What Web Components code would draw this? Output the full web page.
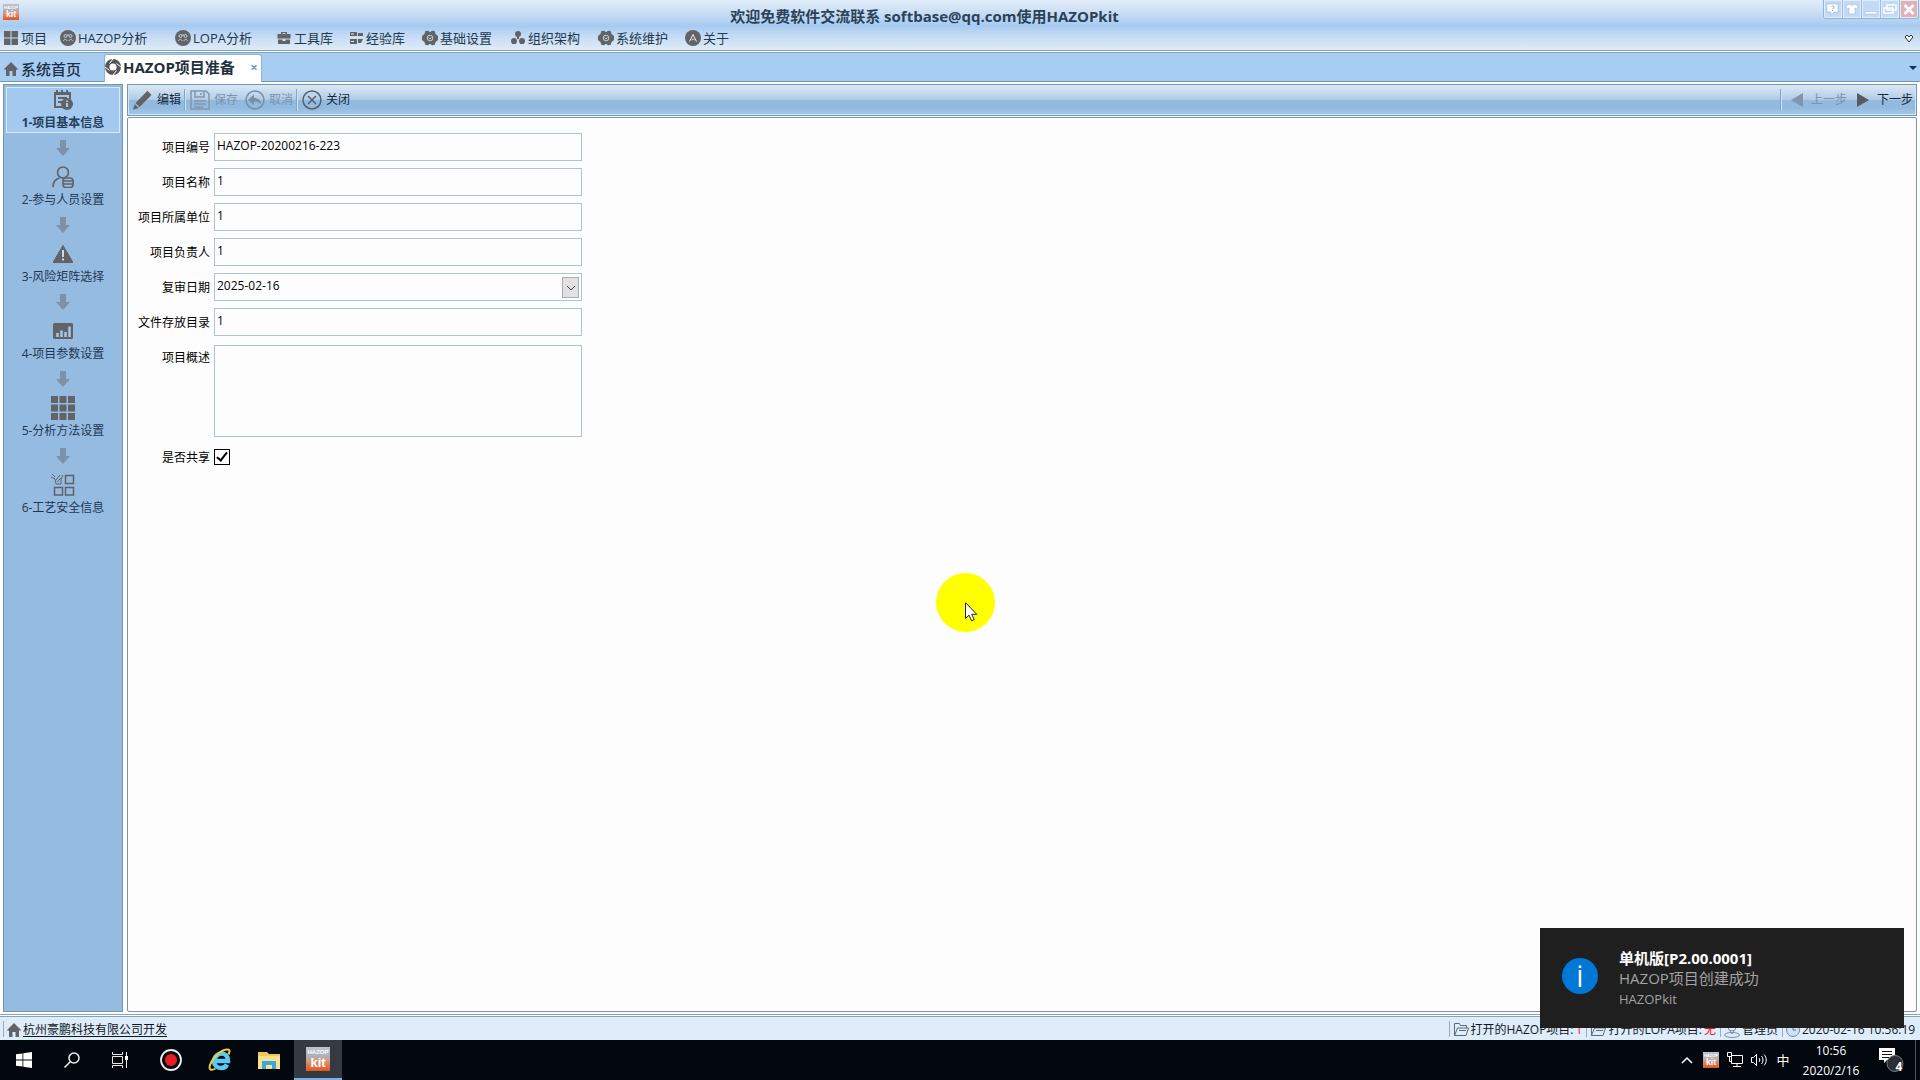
<!DOCTYPE html>
<html lang="zh-CN">
<head>
<meta charset="utf-8">
<title>HAZOPkit</title>
<style>
html,body{height:100%;margin:0}
body{font-family:"Open Sans","Noto Sans CJK SC",sans-serif;font-size:12px;line-height:16px;color:#101820;background:#fff;overflow:hidden;
--line:#7397ab;--ink:#22384f;--icon:#626366}
</style>
</head>
<body>
<hk-app></hk-app>
<script>
const define = (name, html, setup) => {
  const tpl = document.createElement('template');
  tpl.innerHTML = html;
  customElements.define(name, class extends HTMLElement {
    constructor() {
      super();
      this.attachShadow({ mode: 'open' }).append(tpl.content.cloneNode(true));
    }
    connectedCallback() {
      if (this.ready) return;
      this.ready = true;
      if (setup) setup(this, this.shadowRoot);
    }
  });
};

const gear = '<path d="M3.500 1 6 .8l2 1.500L10 .8l2.500.2 1.100 3L16 6v4l-2.400 2-1.100 3-2.500.2-2-1.500-2 1.500-2.500-.2-1.100-3L0 10V6l2.400-2z"/><circle cx="8" cy="8" r="2.800" fill="none" stroke="#c3d0de"/><path d="M6.500 7.500 8 9l1.500-1.500" fill="none" stroke="#c3d0de"/>';
const badge = '<circle cx="8" cy="8" r="8"/><g fill="none" stroke="#c3d0de"><circle cx="5.500" cy="6" r="1.500"/><circle cx="10.500" cy="6" r="1.500"/><path d="M3.500 11c0-2 3.500-2 3.500 0M9 11c0-2 3.500-2 3.500 0M8 4v2"/></g>';
const kit = '<defs><linearGradient id="k" x2="0" y2="1"><stop stop-color="#bfc3cd"/><stop offset=".4" stop-color="#aeb0b8"/><stop offset=".55" stop-color="#d79a80"/><stop offset="1" stop-color="#e2551f"/></linearGradient></defs><rect width="24" height="24" fill="url(#k)"/><g fill="#fff" font-family="Liberation Sans" font-weight="700" text-anchor="middle"><text x="12" y="7" font-size="6">HAZOP</text><text x="12" y="20" font-size="13">kit</text></g>';
const folder = '<g fill="none" stroke="#5e6a76" stroke-width="1"><path d="M1.500 13.500v-12h5l1 2h6v2.500"/><path d="M1.500 13.500 4.500 6h11l-2.500 7.500z"/><path d="M6 8.500h7"/></g>';

const icons = {
  grid4: [14, '<path d="M0 0h6.500v6.500H0zM7.500 0H14v6.500H7.500zM0 7.500h6.500V14H0zM7.500 7.500H14V14H7.500z"/>'],
  badge: [16, badge],
  gear: [16, gear],
  kit: [24, kit],
  folder: [16, folder],
  cabinet: [16, '<path d="M5 4V2h6v2h3.500v4.500h-13V4zm1.500 0h3V3h-3zM2 9.500h4.500V11h3V9.500H14V14H2z"/>'],
  library: [16, '<path d="M2 2h7v4H2zM2 9h7v5H2zM10 3h5v3h-5zM10 9h5l-2 4h-3z"/><path d="M3 4h3M3 11.500h3M2 7.500h12" stroke="#dce8f5" fill="none"/>'],
  org: [16, '<circle cx="8" cy="4" r="3"/><circle cx="4" cy="11" r="3"/><circle cx="12" cy="11" r="3"/><path d="M2 10.500h4V14H2zM10 10.500h4V14h-4zM7 6h2v3H7z"/>'],
  about: [16, '<circle cx="8" cy="8" r="8"/><path d="M4.500 11.500 8 4.500l3.500 7M6.500 10c1-1 2-1 3 0" fill="none" stroke="#e2ebf5"/>'],
  home: [14, '<path d="M7 0 14 7l-1 1-1-.7V14H8.500V9h-3v5H2V7.300L1 8 0 7z"/>'],
  aperture: [16, '<circle cx="8" cy="8" r="5.800" fill="none" stroke="#555" stroke-width="4.400"/><path d="M4.500 4.500 8 0M11.500 4.500 16 8M11.500 11.500 8 16M4.500 11.500 0 8" stroke="#fff" fill="none"/>'],
  plan: [20, '<path d="M1 2h17v3H1zM3 0h2v3H3zM8 0h2v3H8zM13 0h2v3h-2z"/><path d="M2 4v13h8M17 4v5M5 8h9M5 12h4" fill="none" stroke="#626366" stroke-width="2"/><circle cx="14" cy="14" r="6"/><path d="M14 13v4M14 10.500v1.500" stroke="#a3c9ef" stroke-width="2" fill="none"/>'],
  person: [22, '<g fill="none" stroke="#626366" stroke-width="1.600"><circle cx="11" cy="6.500" r="5.500"/><path d="M1 21c0-5 3-8 6.500-9"/><rect x="11" y="12" width="10" height="9.500" rx="3"/><path d="M11 15h11M11 18h11"/></g>'],
  warning: [20, '<path d="M10 1.500 20 18.500H0z" stroke="#626366" stroke-linejoin="round"/><path d="M10 6v7M10 14.500v2" stroke="#c8dcf0" stroke-width="2"/>'],
  chart: [20, '<rect y="2" width="20" height="16" rx="1.500"/><path d="M4.500 16v-4M8.500 16V9.500M12.500 16v-5M16.500 16V5.500" stroke="#a8c8e8" stroke-width="2.500"/>'],
  grid9: [24, '<path d="M0 0h7v7H0zM8.500 0h7v7h-7zM17 0h7v7h-7zM0 8.500h7v7H0zM8.500 8.500h7v7h-7zM17 8.500h7v7h-7zM0 17h7v7H0zM8.500 17h7v7h-7zM17 17h7v7h-7z"/>'],
  process: [24, '<g fill="none" stroke="#626366" stroke-width="1.500"><path d="M14.500 2.500h8v8h-8zM3.500 14.500h8v7.500h-8zM14.500 14.500h8v7.500h-8z"/></g><path fill="none" stroke="#626366" d="M1 1l3 3M0 4l4 2 1 5h5V6l2-4M9 2 5 7M6 9l4-4"/>'],
  down: [16, '<path d="M5 0h6v8h4l-7 8-7-8h4z" fill="#7d91a8"/>'],
  pencil: [20, '<path d="M14.500.8 18.500 5l-12 12-4-4zM1.800 14.200l3.800 3.800L0 19.800z"/>'],
  save: [20, '<g fill="none" stroke="#8296aa" stroke-width="1.500"><path d="M1 1h15l3 3v15H1zM5 1v6h9V1M4 11h12M4 14h12M4 17h9M11 3v2"/></g>'],
  undo: [20, '<circle cx="10" cy="10" r="9" fill="none" stroke="#7a8fa5" stroke-width="1.500"/><path d="M9 4.500V8c4 0 7 2 7 6.500C14 12 12 11.500 9 11.500V15l-6-5z" fill="#7a8fa5"/>'],
  close: [20, '<g fill="none" stroke="#56616c" stroke-width="1.500"><circle cx="10" cy="10" r="9"/><path d="m6 6 8 8M14 6l-8 8"/></g>'],
  prev: [14, '<path d="M13 0v14L1 7z" fill="#8095ab"/>'],
  next: [14, '<path d="M1 0v14l12-7z" fill="#585c62"/>'],
  user: [16, '<g fill="none" stroke="#7d8fa2"><circle cx="8" cy="5" r="4"/><path d="M6 9 8 12l2-3"/><ellipse cx="8" cy="13" rx="7.500" ry="2.500"/></g>'],
  clock: [14, '<circle cx="7" cy="7" r="6.500" fill="#cfe2f4" stroke="#6c8cab"/><path d="M7 3v4h3" fill="none" stroke="#55708c"/>'],
  info: [36, '<circle cx="18" cy="18" r="18" fill="#0078d7"/><path d="M18 12v17M18 7.500v2.500" stroke="#fff" stroke-width="2.500"/>'],
  windows: [16, '<path fill="#fff" d="M0 2.300 6.500 1.400V7.600H0zM7.300 1.300 16 0v7.600H7.300zM0 8.400h6.500v6.200L0 13.700zM7.300 8.400H16V16l-8.700-1.300z"/>'],
  search: [16, '<g fill="none" stroke="#f0f0f0" stroke-width="1.500"><circle cx="10" cy="6" r="5"/><path d="M6.500 9.500.5 15.500"/></g>'],
  taskview: [16, '<path fill="none" stroke="#e8e8e8" d="M.5 0v2.500h10V0M.5 4.500h10v7H.5zM.5 16v-2.500h10V16M14.500 0v16"/><path fill="#fff" d="M13 4h3v4h-3z"/>'],
  record: [22, '<circle cx="11" cy="11" r="10" fill="#080808" stroke="#eee" stroke-width="1.800"/><circle cx="11" cy="11" r="6" fill="#e81c24"/>'],
  ie: [24, '<path fill="none" stroke="#5cc8f5" stroke-width="4.500" d="M6 13h14c0-5-3-7.500-6.500-7.500S6 9 6 13s3 7 7 7c3 0 5-1.200 6-3.500"/><path fill="none" stroke="#f5cf35" stroke-width="2" d="M20.500 6.500c2-4 .8-5.500-2-5C13 2 4.500 9.500 2 17c-1.500 5 1 6 5.500 3.500"/>'],
  explorer: [24, '<path fill="#f0c95c" d="M1 4h9l2 2h11v15H1z"/><path fill="#fbe18f" d="M1 8h22v13H1z"/><path fill="#39a9dc" d="M5 13h14v8h-4v-4H9v4H5z"/>'],
  up: [12, '<path d="M1 9l5-5 5 5" fill="none" stroke="#fff" stroke-width="1.500"/>'],
  network: [16, '<path d="M4.500 3.500h11v8h-11zM10 11.500v3M6 14.500h8M.5.500h4v4h-4zM2.500 4.500v5h2" fill="#03080f" stroke="#fff"/>'],
  sound: [16, '<g fill="none" stroke="#fff"><path d="M.5 5.500h2l3-3v11l-3-3h-2zM8 6c1 1 1 3 0 4M10.500 4c2 2 2 6 0 8M13 2.500c3 3 3 8 0 11"/></g>'],
  action: [26, '<path d="M1 1h16v12h-8l-3 3v-3H1z" fill="#fff"/><path d="M4 4.500h10M4 7.500h10M4 10.500h7" stroke="#10151c"/><circle cx="17" cy="16.500" r="8" fill="#2a2d31" stroke="#777b80"/>'],
  help: [16, '<path fill="#fff" stroke="#8faed0" stroke-width=".5" d="M2 3h11v8H9l-3 3v-3H2z"/><path d="M6.500 5.500c1-1.500 3.500 0 2 1.500l-1 1M7.500 9v1" fill="none" stroke="#89a9cc"/>'],
  shirt: [16, '<path fill="#fff" stroke="#8faed0" stroke-width=".5" d="M5 3c2 1.500 4 1.500 6 0l3.500 2.500-2 2.500-1.500-1v6H5V7L3.500 8l-2-2.500z"/>'],
  min: [16, '<path fill="#fff" stroke="#9bb7d6" stroke-width=".5" d="M2 10.500h12V13H2z"/>'],
  max: [16, '<path fill="#b7d2ef" stroke="#fff" stroke-width="1.500" d="M5 4h9v5H5zM2 7h9v5H2z"/>'],
  x: [16, '<path d="m3.500 4 9 9M12.500 4l-9 9" stroke="#fff" stroke-width="2.500"/>'],
  more: [10, '<path d="M1 3l2-2 2 2 2-2 2 2-4 5z" fill="#fff" stroke="#22384f"/>'],
  caret: [8, '<path d="M0 2h8L4 6z" fill="#17304f"/>'],
  chevron: [10, '<path d="M1 3l4 4 4-4" fill="none" stroke="#444"/>']
};

define('hk-icon', `<style>:host{display:block;flex:none;color:var(--icon)}svg{display:block;overflow:hidden}</style><svg fill="currentColor" aria-hidden="true"></svg>`, (el, root) => {
  const [box, art] = icons[el.getAttribute('name')];
  const size = el.getAttribute('size') || box;
  const svg = root.querySelector('svg');
  svg.setAttribute('viewBox', `0 0 ${box} ${box}`);
  svg.setAttribute('width', size);
  svg.setAttribute('height', size);
  svg.innerHTML = art;
});

define('hk-titlebar', `<style>
:host{display:flex;height:27px;align-items:flex-start}
.logo{padding:4px 3px}
h1{flex:1;text-align:center;margin:0;padding:6px 0 0 4px;font-size:15px;line-height:20px;font-weight:700;color:#2a4258}
.win{display:flex;margin-right:1px;border:1px solid #8fb3dd;border-top:0;border-radius:0 0 3px 3px;overflow:hidden}
button{width:19px;height:18px;padding:0;border:0;border-right:1px solid #9dbde2;background:#c3daf4;display:grid;place-items:center;box-shadow:inset 0 0 0 1px #dfecfa}
button:last-child{background:#e2b0b8;border-right:0;width:18px}
</style><div class="logo"><hk-icon name="kit" size="16"></hk-icon></div><h1><slot></slot></h1>
<div class="win"><button aria-label="帮助"><hk-icon name="help"></hk-icon></button><button aria-label="皮肤"><hk-icon name="shirt"></hk-icon></button><button aria-label="最小化"><hk-icon name="min"></hk-icon></button><button aria-label="还原"><hk-icon name="max"></hk-icon></button><button aria-label="关闭"><hk-icon name="x"></hk-icon></button></div>`);

define('hk-menu-item', `<style>:host{display:block}
button{display:flex;align-items:center;gap:2px;padding:0;border:0;background:none;font:inherit;font-size:13px;line-height:20px;color:var(--ink);white-space:nowrap}
.i{width:16px;display:grid;place-items:center}
</style><button><span class="i"></span><slot></slot></button>`, (el, root) => {
  root.querySelector('.i').innerHTML = `<hk-icon name="${el.getAttribute('icon')}"></hk-icon>`;
});

define('hk-menubar', `<style>
:host{display:flex;justify-content:space-between;align-items:flex-start;height:23px;padding:0 6px 0 3px}
nav{display:grid;grid-template-columns:57px 115px 101px 72px 74px 88px 88px 87px auto;padding-top:1px}
button{border:0;background:none;padding:7px 0 0}
</style><nav>
<hk-menu-item icon="grid4">项目</hk-menu-item><hk-menu-item icon="badge">HAZOP分析</hk-menu-item><hk-menu-item icon="badge">LOPA分析</hk-menu-item><hk-menu-item icon="cabinet">工具库</hk-menu-item><hk-menu-item icon="library">经验库</hk-menu-item><hk-menu-item icon="gear">基础设置</hk-menu-item><hk-menu-item icon="org">组织架构</hk-menu-item><hk-menu-item icon="gear">系统维护</hk-menu-item><hk-menu-item icon="about">关于</hk-menu-item></nav>
<button aria-label="更多"><hk-icon name="more"></hk-icon></button>`);

define('hk-tabs', `<style>
:host{display:flex;height:29px;box-sizing:border-box;background:#a7cdf2;box-shadow:inset 0 -1px var(--line);font-size:15px;line-height:20px;color:#1c3047}
.tab{display:flex;align-items:center;gap:3px;border:0;background:none;font:inherit;color:inherit;font-weight:500;padding:3px 0 0 4px;width:100px;flex:none}
.on{margin-left:4px;width:158px;box-sizing:border-box;margin-top:1px;padding:0 3px 3px 0;gap:2px;background:#fff;border:1px solid #8fb3d3;border-bottom:0;border-radius:3px 3px 0 0;font-weight:700;display:flex;align-items:center;color:#222f3d}
.on span{flex:1}
.on button{border:0;background:none;padding:0;width:8px;font:700 13px/16px "Open Sans";color:#6a9cc6}
.more{margin-left:auto;border:0;background:none;padding:0 3px}
</style><button class="tab"><hk-icon name="home"></hk-icon>系统首页</button><div class="on"><hk-icon name="aperture"></hk-icon><span>HAZOP项目准备</span><button aria-label="关闭标签">×</button></div><button class="more" aria-label="标签列表"><hk-icon name="caret"></hk-icon></button>`);

define('hk-step', `<style>
:host{display:flex;flex-direction:column;align-items:center}
button{box-sizing:border-box;width:100%;height:46px;padding:0;border:1px solid transparent;background:none;font:inherit;color:#1d3854;display:flex;flex-direction:column;align-items:center;justify-content:space-between}
.i{height:24px;display:grid;place-items:center}
button span:last-child{line-height:18px}
:host([active]) button{border-color:#d8ebfc;background:#a3c9ef;font-weight:700;color:#24405c}
.arrow{padding:7px 0 8px}
:host(:last-of-type) .arrow{display:none}
</style><button><span class="i"></span><span><slot></slot></span></button><div class="arrow"><hk-icon name="down"></hk-icon></div>`, (el, root) => {
  root.querySelector('.i').innerHTML = `<hk-icon name="${el.getAttribute('icon')}"></hk-icon>`;
});

define('hk-sidebar', `<style>:host{display:block;box-sizing:border-box;border:1px solid var(--line);background:#95bbe1;padding:2px}</style>
<hk-step active icon="plan">1-项目基本信息</hk-step><hk-step icon="person">2-参与人员设置</hk-step><hk-step icon="warning">3-风险矩阵选择</hk-step><hk-step icon="chart">4-项目参数设置</hk-step><hk-step icon="grid9">5-分析方法设置</hk-step><hk-step icon="process">6-工艺安全信息</hk-step>`);

define('hk-tool', `<style>:host{display:block}
button{display:flex;align-items:center;gap:4px;padding:0;border:0;background:none;font:inherit;color:#16283c}
button:disabled{color:#7b93ab}
:host([wide]) button{gap:7px}
</style><button><span class="i"></span><slot></slot></button>`, (el, root) => {
  root.querySelector('.i').innerHTML = `<hk-icon name="${el.getAttribute('icon')}"></hk-icon>`;
  root.querySelector('button').disabled = el.hasAttribute('disabled');
});

define('hk-toolbar', `<style>
:host{display:flex;align-items:center;height:32px;box-sizing:border-box;border:1px solid var(--line);box-shadow:inset 0 0 0 1px #d5e6f7;padding:0 3px 0 5px;background:linear-gradient(#dbe8f6,#b2cde6 48%,#92b9de 52%,#92b9de 75%,#a5c9ec)}
i{width:1px;height:22px;background:#7fa5c8;border-right:1px solid #d3e3f3;margin:0 4px 0 3px}
.gap{flex:1}
.a{margin-right:7px}.b{margin:0 8px}.c{margin-right:9px}
</style><hk-tool icon="pencil">编辑</hk-tool><i></i><hk-tool class="a" icon="save" disabled>保存</hk-tool><hk-tool icon="undo" disabled>取消</hk-tool><i></i><hk-tool icon="close">关闭</hk-tool><span class="gap"></span><i class="b"></i><hk-tool class="c" wide icon="prev" disabled>上一步</hk-tool><hk-tool wide icon="next">下一步</hk-tool>`);

define('hk-field', `<style>
:host{display:grid;grid-template-columns:82px 368px;column-gap:4px;color:#000}
label{text-align:right;line-height:30px;height:28px}
.box{display:flex;box-sizing:border-box;min-height:28px;border:1px solid #afc4d3;background:#fdfdfd}
input,textarea{flex:1;min-width:0;border:0;outline:0;background:none;padding:0 2px 2px;margin:0;font:inherit;color:#000;resize:none}
textarea{height:90px;box-sizing:border-box}
.box button{width:17px;height:21px;margin:3px 2px 0 0;padding:0;border:1px solid #adadad;background:#e1e1e1;display:grid;place-items:center}
:host([kind=check]) .box{border:0;background:none;align-items:center;padding-bottom:2px}
input[type=checkbox]{appearance:none;flex:none;width:16px;height:16px;padding:0;border:1px solid #000;background:#fff;display:grid;place-items:center}
input[type=checkbox]:checked::before{content:"";width:4px;height:9px;border:solid #000;border-width:0 2px 2px 0;transform:rotate(38deg);margin-bottom:3px}
:host([kind=area]) label{line-height:26px}
:host([kind=check]) label{line-height:28px}
</style><label for="f"></label><div class="box"></div>`, (el, root) => {
  const kind = el.getAttribute('kind');
  root.querySelector('label').textContent = el.getAttribute('label');
  root.querySelector('.box').innerHTML = kind === 'area' ? '<textarea id="f"></textarea>'
    : kind === 'check' ? '<input id="f" type="checkbox" checked>'
    : `<input id="f" type="text" value="${el.getAttribute('value')}">` + (kind === 'date' ? '<button aria-label="选择日期"><hk-icon name="chevron"></hk-icon></button>' : '');
});

define('hk-form', `<style>
:host{display:block;box-sizing:border-box;border:1px solid var(--line);border-radius:2px;background:#fdfdfd;padding:15px 0 0}
form{display:flex;flex-direction:column;gap:7px}
.area{padding-top:2px}
</style><form><hk-field label="项目编号" value="HAZOP-20200216-223"></hk-field><hk-field label="项目名称" value="1"></hk-field><hk-field label="项目所属单位" value="1"></hk-field><hk-field label="项目负责人" value="1"></hk-field><hk-field kind="date" label="复审日期" value="2025-02-16"></hk-field><hk-field label="文件存放目录" value="1"></hk-field><hk-field class="area" kind="area" label="项目概述"></hk-field><hk-field kind="check" label="是否共享"></hk-field></form>`);

define('hk-status', `<style>
:host{display:flex;align-items:center;height:23px;background:#dfecf9;white-space:nowrap;padding:0 2px 0 3px;color:#0f1822}
a{color:inherit;text-underline-offset:2px}
span{display:flex;align-items:center;gap:2px;padding-top:2px}
i{width:1px;height:16px;background:#93adc4;margin:0 3px 0 4px}
i:first-of-type{margin-left:0}
.gap{flex:1}
.date{min-width:132px}
em{font-style:normal;color:#f01818}
</style><i></i><span><hk-icon name="home"></hk-icon><a href="#">杭州豪鹏科技有限公司开发</a></span><span class="gap"></span><i></i><span><hk-icon name="folder"></hk-icon>打开的HAZOP项目:<em>1</em></span><i></i><span><hk-icon name="folder"></hk-icon>打开的LOPA项目:<em>无</em></span><i></i><span><hk-icon name="user"></hk-icon>管理员</span><i></i><span class="date"><hk-icon name="clock"></hk-icon>2020-02-16 10:56:19</span>`);

define('hk-toast', `<style>
:host{position:absolute;right:16px;bottom:52px;width:364px;height:100px;box-sizing:border-box;padding:20px 22px 0;background:#1f1f1f;display:flex;gap:21px;color:#a3a3a3;font-size:15px;line-height:20px}
hk-icon{padding-top:10px}
strong{display:block;color:#fff;font-weight:700}
p{margin:0}
small{display:block;font-size:13px;line-height:22px}
</style><hk-icon name="info"></hk-icon><div><strong>单机版[P2.00.0001]</strong><p>HAZOP项目创建成功</p><small>HAZOPkit</small></div>`);

define('hk-taskbar', `<style>
:host{display:flex;height:40px;background:#03080f;color:#fff}
button{border:0;padding:0;background:none;display:grid;place-items:center;width:48px;font:inherit;color:inherit}
.app{width:49px}
.first{margin-left:2px}
.on{width:48px;margin-left:1px;background:#353a40;border-bottom:2px solid #76b1e8}
.gap{flex:1}
.tray{display:flex;align-items:center}
.tray button{width:24px;height:40px;font-size:13px}
.clock{display:grid;text-align:center;line-height:20px;width:72px;padding-top:1px}
.tray .act{width:34px;margin-left:7px;position:relative}
.act b{position:absolute;right:3px;top:19px;width:12px;font-size:12px;line-height:16px}
.edge{width:4px;height:40px;border-left:1px solid #50555b;margin-left:7px;box-sizing:border-box;width:5px}
</style><button aria-label="开始"><hk-icon name="windows"></hk-icon></button><button aria-label="搜索"><hk-icon name="search"></hk-icon></button><button aria-label="任务视图"><hk-icon name="taskview"></hk-icon></button><button class="app first" aria-label="录制"><hk-icon name="record"></hk-icon></button><button class="app" aria-label="浏览器"><hk-icon name="ie"></hk-icon></button><button class="app" aria-label="文件"><hk-icon name="explorer"></hk-icon></button><button class="on" aria-label="应用"><hk-icon name="kit"></hk-icon></button><span class="gap"></span>
<div class="tray"><button aria-label="隐藏的图标"><hk-icon name="up"></hk-icon></button><button aria-label="应用"><hk-icon name="kit" size="16"></hk-icon></button><button aria-label="网络"><hk-icon name="network"></hk-icon></button><button aria-label="音量"><hk-icon name="sound"></hk-icon></button><button>中</button><div class="clock"><span>10:56</span><span>2020/2/16</span></div><button class="act" aria-label="通知"><hk-icon name="action"></hk-icon><b>4</b></button><span class="edge"></span></div>`);

define('hk-pointer', `<style>:host{position:absolute;left:936px;top:573px;width:59px;height:59px;border-radius:50%;background:#ff0;pointer-events:none}svg{position:absolute;left:29px;top:29px}</style>
<svg width="13" height="20" viewBox="0 0 13 20"><path d="M.5.7v15.800l3.500-3.300 2.600 5.600 2.600-1.200-2.500-5.300h5.100z" fill="#fff" stroke="#222"/></svg>`);

define('hk-app', `<style>
:host{display:flex;flex-direction:column;height:100vh;position:relative}
header{background:linear-gradient(#e2ecf8,#c6dcf4 28%,#a6caf0 52%,#c2daf4 70%,#e0ebf8) padding-box;border-bottom:3px double #83a3b6}
main{flex:1;min-height:0;display:grid;grid-template-columns:120px 1fr;column-gap:4px;padding:2px 3px;border-bottom:3px double #83a3b6}
.work{display:grid;grid-template-rows:auto 1fr;row-gap:1px}
</style><header><hk-titlebar>欢迎免费软件交流联系 softbase@qq.com使用HAZOPkit</hk-titlebar><hk-menubar></hk-menubar></header><hk-tabs></hk-tabs><main><hk-sidebar></hk-sidebar><div class="work"><hk-toolbar></hk-toolbar><hk-form></hk-form></div></main><hk-status></hk-status><hk-taskbar></hk-taskbar><hk-toast></hk-toast><hk-pointer></hk-pointer>`);
</script>
</body>
</html>
